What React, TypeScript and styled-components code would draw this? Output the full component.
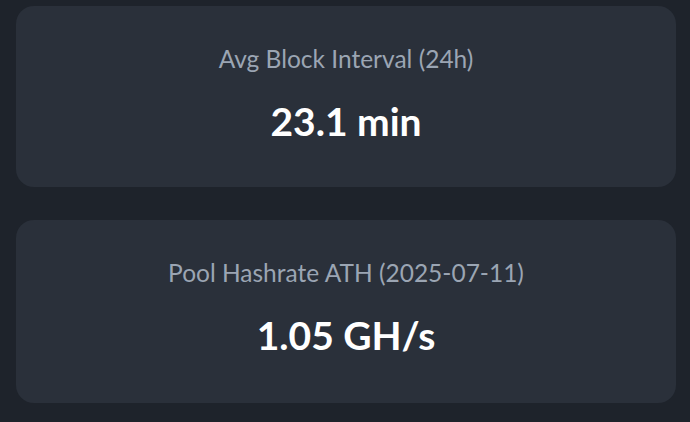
import styled, { createGlobalStyle } from "styled-components";

const GlobalStyle = createGlobalStyle`
  html, body {
    margin: 0;
    padding: 0;
    background: #1e232b;
  }
  body {
    font-family: Lato, "Liberation Sans", sans-serif;
  }
`;

const Page = styled.div`
  display: flex;
  flex-direction: column;
  gap: 33px;
  padding: 6px 14px 0 16px;
`;

const StatCard = styled.div<{ $height: number }>`
  height: ${(p) => p.$height}px;
  box-sizing: border-box;
  background: #2a303a;
  border-radius: 18px;
  display: flex;
  flex-direction: column;
  align-items: center;
  padding-top: 38px;
`;

const Label = styled.div`
  font-size: 24.5px;
  line-height: 30px;
  color: #9ba5b3;
`;

const Value = styled.div`
  margin-top: 25px;
  font-size: 39px;
  line-height: 44px;
  font-weight: 700;
  color: #ffffff;
`;

const stats = [
  { label: "Avg Block Interval (24h)", value: "23.1 min", height: 181 },
  { label: "Pool Hashrate ATH (2025-07-11)", value: "1.05 GH/s", height: 183 },
];

export default function App() {
  return (
    <>
      <GlobalStyle />
      <Page>
        {stats.map((s) => (
          <StatCard key={s.label} $height={s.height}>
            <Label>{s.label}</Label>
            <Value>{s.value}</Value>
          </StatCard>
        ))}
      </Page>
    </>
  );
}
